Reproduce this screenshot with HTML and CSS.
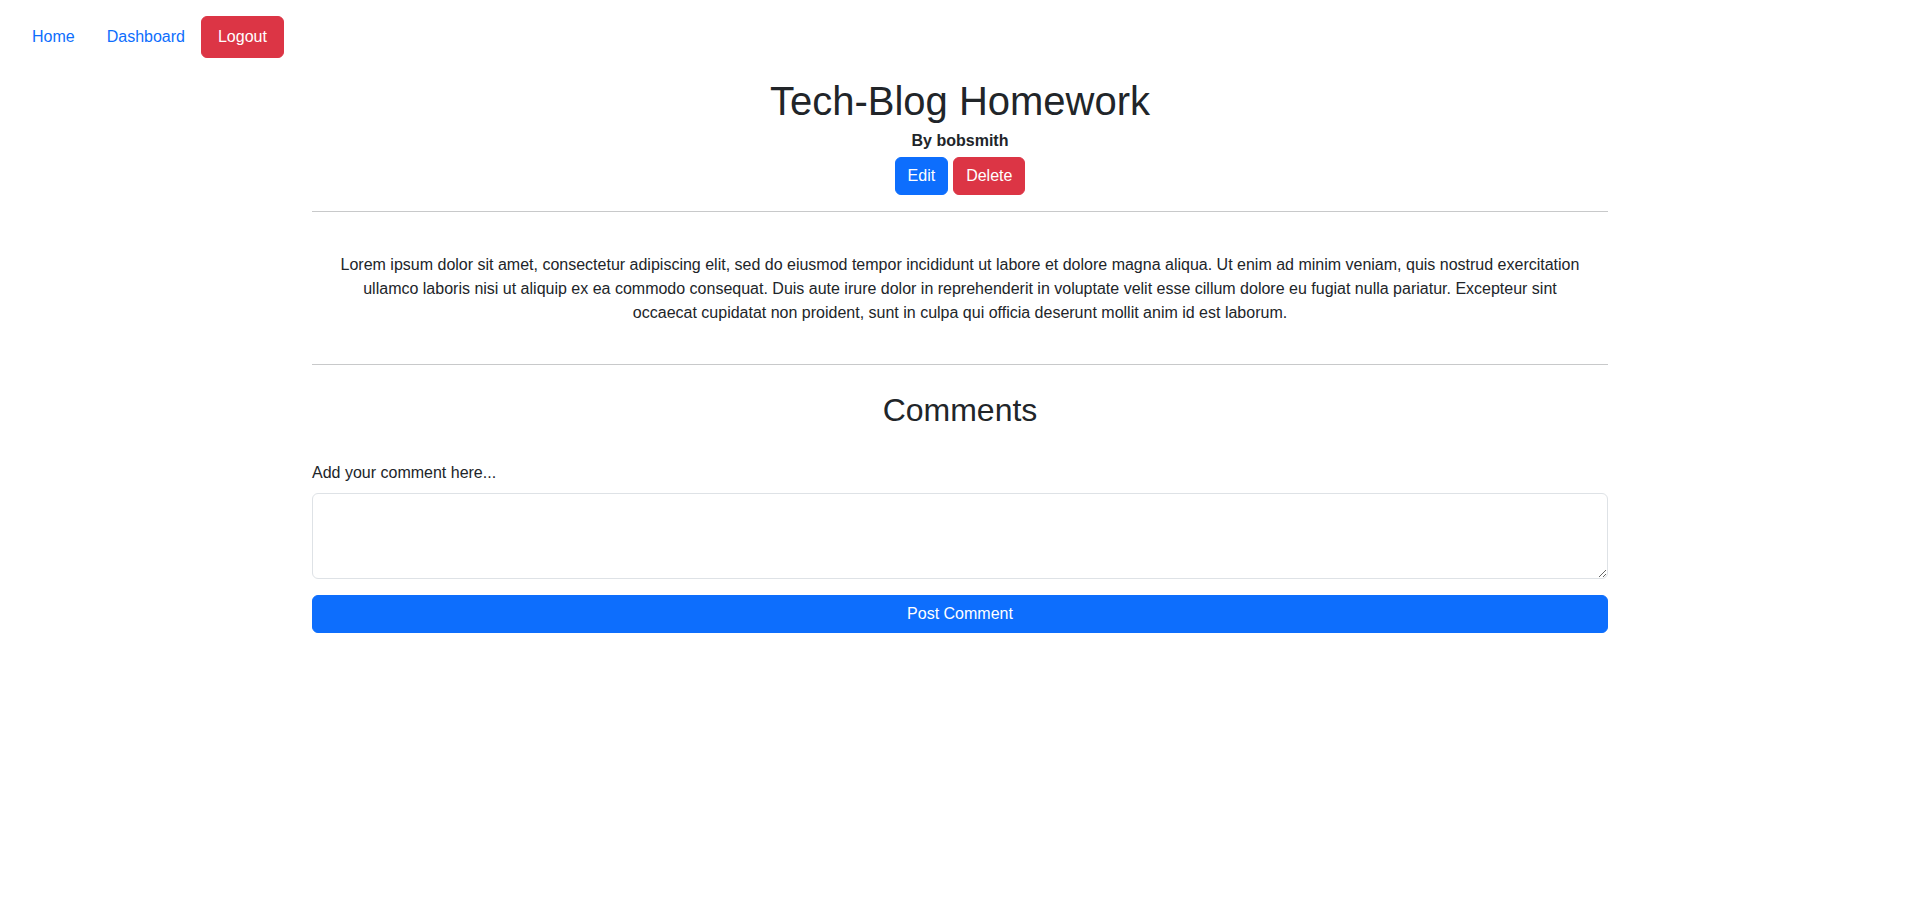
FILE: index.html
```html
<!DOCTYPE html>
<html lang="en">
<head>
<meta charset="utf-8">
<title>Tech-Blog Homework</title>
<link rel="stylesheet" href="styles.css">
</head>
<body>
<nav class="topnav">
  <ul class="nav-list">
    <li><a class="nav-link" href="#">Home</a></li>
    <li><a class="nav-link" href="#">Dashboard</a></li>
    <li><a class="nav-link btn btn-danger" href="#">Logout</a></li>
  </ul>
</nav>
<main class="container">
  <header class="post-header">
    <h1 class="post-title">Tech-Blog Homework</h1>
    <h6 class="byline">By bobsmith</h6>
    <div class="actions">
      <button class="btn btn-primary" type="button">Edit</button>
      <button class="btn btn-danger" type="button">Delete</button>
    </div>
  </header>
  <hr class="divider">
  <div class="post-body">
    <p class="post-text">Lorem ipsum dolor sit amet, consectetur adipiscing elit, sed do eiusmod tempor incididunt ut labore et dolore magna aliqua. Ut enim ad minim veniam, quis nostrud exercitation ullamco laboris nisi ut aliquip ex ea commodo consequat. Duis aute irure dolor in reprehenderit in voluptate velit esse cillum dolore eu fugiat nulla pariatur. Excepteur sint occaecat cupidatat non proident, sunt in culpa qui officia deserunt mollit anim id est laborum.</p>
  </div>
  <hr class="divider">
  <section class="comments">
    <h2 class="comments-title">Comments</h2>
    <form class="comment-form">
      <label class="form-label" for="comment">Add your comment here...</label>
      <textarea class="form-control" id="comment" rows="3"></textarea>
      <button class="btn btn-primary btn-block" type="button">Post Comment</button>
    </form>
  </section>
</main>
</body>
</html>
```

FILE: styles.css
```css
* {
  box-sizing: border-box;
}

body {
  margin: 0;
  font-family: "Liberation Sans", Arial, sans-serif;
  font-size: 16px;
  line-height: 1.5;
  color: #212529;
  background: #fff;
}

.topnav {
  padding: 16px 16px 0 16px;
}

.nav-list {
  display: flex;
  align-items: center;
  list-style: none;
  margin: 0;
  padding: 0;
}

.nav-link {
  display: block;
  padding: 8px 16px;
  color: #0d6efd;
  text-decoration: none;
  line-height: 24px;
}

.btn {
  display: inline-block;
  font-family: inherit;
  font-size: 16px;
  line-height: 24px;
  padding: 6px 12px;
  border: 1px solid transparent;
  border-radius: 6px;
  color: #fff;
  text-decoration: none;
  text-align: center;
  cursor: pointer;
}

.nav-link.btn {
  padding: 8px 16px;
}

.btn-primary {
  background: #0d6efd;
  border-color: #0d6efd;
}

.btn-danger {
  background: #dc3545;
  border-color: #dc3545;
}

.container {
  max-width: 1296px;
  margin: 0 auto;
  padding-top: 19px;
}

.post-header {
  text-align: center;
}

.post-title {
  margin: 0 0 6px;
  font-size: 40px;
  font-weight: 500;
  line-height: 48px;
}

.byline {
  margin: 0 0 7px;
  font-size: 16px;
  font-weight: 700;
  line-height: 19.2px;
}

.actions {
  display: flex;
  justify-content: center;
  gap: 5px;
}

.divider {
  margin: 16px 0;
  border: 0;
  border-top: 1px solid #c8c9ca;
  height: 0;
}

.post-body {
  padding: 25px 20px 23px;
}

.post-text {
  margin: 0;
  text-align: center;
}

.comments {
  padding-top: 10px;
}

.comments-title {
  margin: 0;
  text-align: center;
  font-size: 32px;
  font-weight: 500;
  line-height: 38.4px;
}

.comment-form {
  display: flex;
  flex-direction: column;
  margin-top: 31px;
}

.form-label {
  margin-bottom: 8px;
}

.form-control {
  display: block;
  width: 100%;
  height: 86px;
  padding: 6px 12px;
  font-family: inherit;
  font-size: 16px;
  line-height: 1.5;
  color: #212529;
  border: 1px solid #dee2e6;
  border-radius: 6px;
  background: #fff;
  resize: vertical;
}

.btn-block {
  width: 100%;
  margin-top: 16px;
}
```
